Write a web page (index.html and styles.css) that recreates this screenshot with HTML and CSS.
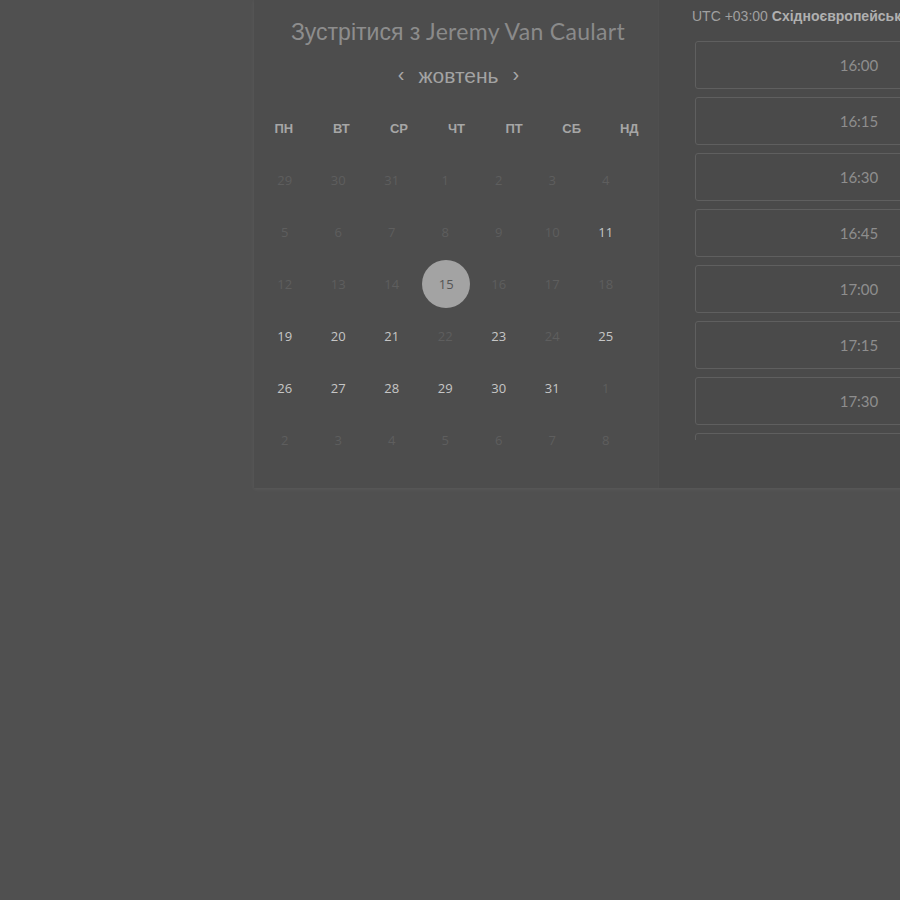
FILE: index.html
```html
<!DOCTYPE html>
<html lang="uk">
<head>
<meta charset="utf-8">
<title>Зустрітися з Jeremy Van Caulart</title>
<link rel="stylesheet" href="styles.css">
</head>
<body>
<div class="panel">
  <section class="calendar">
    <h1 class="title"><span class="title-a">Зустрітися з</span> <span class="title-b">Jeremy Van Caulart</span></h1>
    <div class="month">
      <span class="arrow">‹</span>
      <span class="month-name">жовтень</span>
      <span class="arrow">›</span>
    </div>
    <div class="weekdays">
      <span>ПН</span><span>ВТ</span><span>СР</span><span>ЧТ</span><span>ПТ</span><span>СБ</span><span>НД</span>
    </div>
    <div class="days">
      <span class="day off">29</span><span class="day off">30</span><span class="day off">31</span><span class="day off">1</span><span class="day off">2</span><span class="day off">3</span><span class="day off">4</span>
      <span class="day off">5</span><span class="day off">6</span><span class="day off">7</span><span class="day off">8</span><span class="day off">9</span><span class="day off">10</span><span class="day on">11</span>
      <span class="day off">12</span><span class="day off">13</span><span class="day off">14</span><span class="day sel"><span class="dot">15</span></span><span class="day off">16</span><span class="day off">17</span><span class="day off">18</span>
      <span class="day on">19</span><span class="day on">20</span><span class="day on">21</span><span class="day off">22</span><span class="day on">23</span><span class="day off">24</span><span class="day on">25</span>
      <span class="day on">26</span><span class="day on">27</span><span class="day on">28</span><span class="day on">29</span><span class="day on">30</span><span class="day on">31</span><span class="day off">1</span>
      <span class="day off">2</span><span class="day off">3</span><span class="day off">4</span><span class="day off">5</span><span class="day off">6</span><span class="day off">7</span><span class="day off">8</span>
    </div>
  </section>
  <section class="times">
    <div class="tz">UTC +03:00 <b>Східноєвропейський час</b></div>
    <div class="slots">
      <div class="slot">16:00</div>
      <div class="slot">16:15</div>
      <div class="slot">16:30</div>
      <div class="slot">16:45</div>
      <div class="slot">17:00</div>
      <div class="slot">17:15</div>
      <div class="slot">17:30</div>
      <div class="slot">17:45</div>
    </div>
  </section>
</div>
</body>
</html>
```

FILE: styles.css
```css
html, body {
  margin: 0;
  padding: 0;
  overflow: hidden;
  background: #505050;
  width: 900px;
  height: 900px;
}

.panel {
  display: flex;
  margin-left: 254px;
  width: 800px;
  height: 488px;
  background: #4d4d4d;
  box-shadow: 0 1px 4px rgba(255, 255, 255, 0.07);
}

.calendar {
  width: 405px;
  flex: none;
  padding: 16px 0 22px 1px;
  box-sizing: border-box;
  background: #4d4d4d;
  border-right: 1px solid #4f4f4f;
}

.title {
  margin: 0;
  text-align: center;
  font-weight: normal;
  font-size: 23px;
  line-height: 30px;
  color: #8d8d8d;
  white-space: nowrap;
  padding-left: 3px;
}

.title-a {
  font-family: "Liberation Sans", Arial, sans-serif;
}

.title-b {
  font-family: Lato, "Open Sans", sans-serif;
  font-size: 23px;
  letter-spacing: 0.3px;
  color: #8a8a8a;
}

.month {
  display: flex;
  justify-content: center;
  align-items: center;
  gap: 14px;
  margin-top: 13px;
  height: 30px;
  color: #a3a3a3;
  font-family: "Liberation Sans", Arial, sans-serif;
  padding-left: 4px;
}

.month-name {
  font-size: 21px;
}

.arrow {
  font-size: 20px;
  line-height: 20px;
  padding-bottom: 4px;
  color: #a8a8a8;
}

.weekdays {
  display: grid;
  grid-template-columns: repeat(7, 1fr);
  margin-top: 28px;
  height: 20px;
  line-height: 20px;
  font-family: "Liberation Sans", Arial, sans-serif;
  font-weight: bold;
  font-size: 13px;
  color: #a6a6a6;
  text-align: center;
}

.days {
  display: grid;
  grid-template-columns: repeat(7, 53.5px);
  grid-auto-rows: 52px;
  margin-top: 15px;
  margin-left: 3px;
  font-family: "Open Sans", sans-serif;
  font-size: 13px;
}

.day {
  display: flex;
  align-items: center;
  justify-content: center;
}

.off {
  color: #5e5e5e;
}

.on {
  color: #c6c6c6;
}

.dot {
  width: 48px;
  height: 48px;
  border-radius: 50%;
  background: #a3a3a3;
  color: #555555;
  display: flex;
  align-items: center;
  justify-content: center;
  flex: none;
  margin-left: 2px;
}

.times {
  flex: 1;
  background: #4a4a4a;
  padding: 0 0 0 32px;
  box-sizing: border-box;
}

.tz {
  font-family: "Liberation Sans", Arial, sans-serif;
  font-size: 14px;
  line-height: 16px;
  padding-top: 8px;
  padding-left: 1px;
  color: #a0a0a0;
  white-space: nowrap;
}

.tz b {
  color: #b0b0b0;
}

.slots {
  margin-top: 17px;
  margin-left: 4px;
  height: 399px;
  overflow: hidden;
  display: flex;
  flex-direction: column;
  gap: 8px;
}

.slot {
  flex: none;
  width: 328px;
  height: 48px;
  box-sizing: border-box;
  border: 1px solid #5f5f5f;
  border-radius: 3px;
  display: flex;
  align-items: center;
  justify-content: center;
  font-family: Lato, "Open Sans", sans-serif;
  font-size: 15px;
  color: #8e8e8e;
}
```
